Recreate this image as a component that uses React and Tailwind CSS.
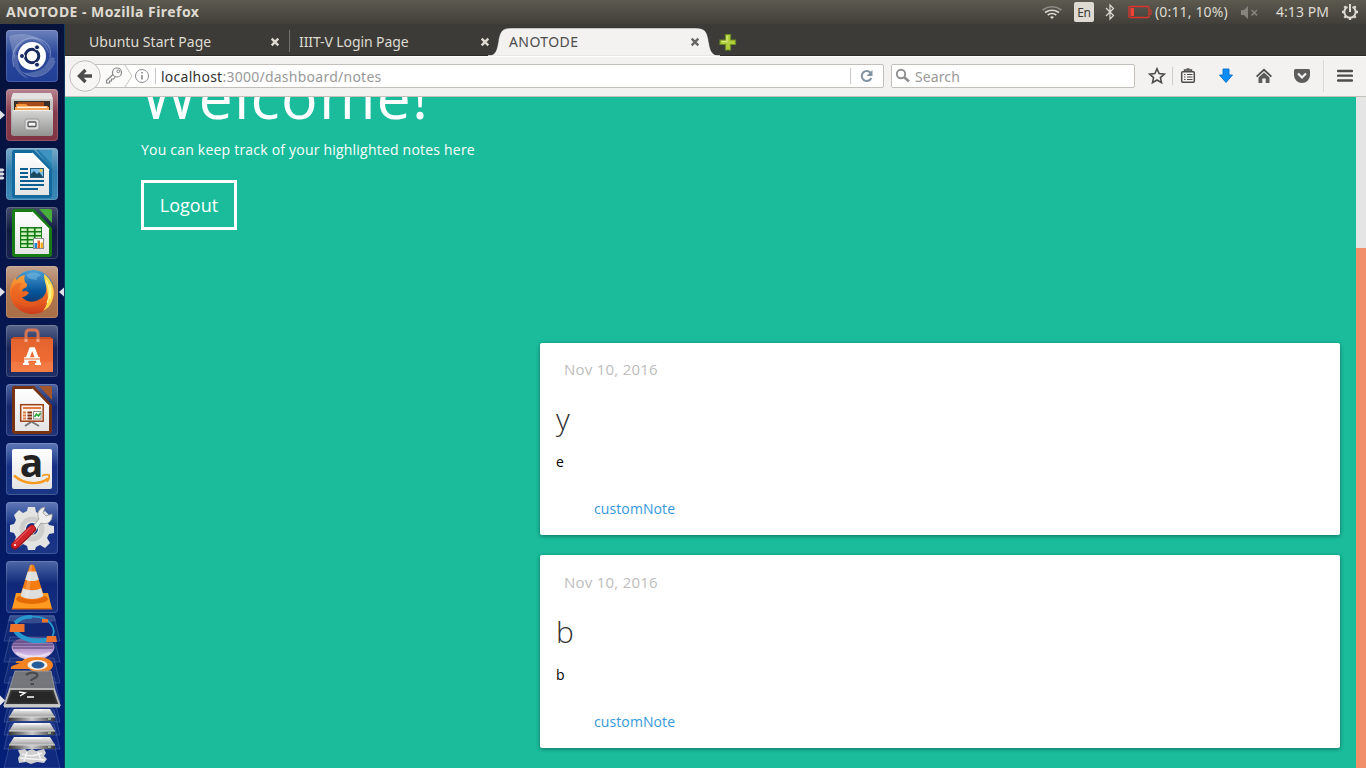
import React from "react";

const UI = "font-['Noto_Sans','Open_Sans',sans-serif]";

/* ---------- launcher icons, drawn on a 52x52 tile ---------- */

const Dash = () => (
  <g>
    <g fill="none" stroke="#b9c8ea" strokeOpacity=".4">
      <path d="M8 37C2 18 18 4 33 9c9 3 13 10 11 18" strokeWidth="1.2" />
      <path d="M49 31C44 46 27 51 17 42" strokeWidth="1" />
    </g>
    <path d="M3 6c13-5 36-2 41 19L38 15C26 4 12 9 8 30z" fill="#fff" fillOpacity=".2" />
    <path d="M49 28c-2 15-18 23-31 15 15 0 22-5 26-16z" fill="#fff" fillOpacity=".2" />
    <path d="M8 24c-3 10 4 22 15 25-9-7-12-14-11-24z" fill="#fff" fillOpacity=".18" />
    <circle cx="26" cy="26" r="14" fill="#fff" />
    <circle cx="26" cy="26" r="6.800" fill="none" stroke="#17295f" strokeWidth="3" />
    <g fill="#17295f" stroke="#fff" strokeWidth="1">
      <circle cx="16" cy="26" r="2.500" />
      <circle cx="31" cy="17.300" r="2.500" />
      <circle cx="31" cy="34.700" r="2.500" />
    </g>
  </g>
);

const Files = () => (
  <g>
    <path d="M7 4h38l2 7v33q0 3-3 3H8q-3 0-3-3V11z" fill="url(#metal)" />
    <path d="M7 4h38l2 6H5z" fill="#e4e2e0" />
    <path d="M8 12h36v12H8z" fill="#3a2e2b" />
    <path d="M12 13h26v5H12z" fill="#a44a18" />
    <path d="M10 15h10l2 2h20v7H10z" fill="#f39237" />
    <path d="M9 18h34v5H9z" fill="#f7a455" />
    <path d="M11 17.500h30v1.500H11z" fill="#fff2dd" />
    <path d="M7 21h38q2 0 2 2v21q0 3-3 3H9q-3 0-3-3V23q0-2 1-2z" fill="url(#metal)" />
    <path d="M7 21.500h38" stroke="#f0f0ef" />
    <rect x="19" y="30" width="14" height="11" rx="2" fill="#dcdcdc" stroke="#989898" />
    <rect x="22" y="33" width="8" height="4.500" rx="1" fill="#f5f5f5" stroke="#555" strokeWidth="1.300" />
  </g>
);

const Paper = ({ c, tab }) => (
  <g>
    <path d="M8 2h20l18 19v26q0 3-3 3H9q-3 0-3-3V5q0-3 2-3z" fill={c} />
    <path d="M33 2h11q2 0 2 2v12z" fill={tab} />
    <path d="M9 5h17l17 17v25H9z" fill="url(#paper)" />
    <path d="M26 5l17 17.500" stroke="#fff" strokeWidth="1.500" />
  </g>
);

const Writer = () => (
  <g>
    <path d="M30 2h14q2 0 2 2v18z" fill="#257fae" />
    <Paper c="#126a9e" tab="#3f93c0" />
    <path d="M14 21h8M14 25h8M14 29h8M14 33h24M14 37h24M14 41h18" stroke="#0b5f93" strokeWidth="1.800" />
    <rect x="24.500" y="20.500" width="13" height="9" fill="#79bee9" stroke="#245a7c" />
    <path d="M25 29v-3l3-3 3 3 2-2 4 5z" fill="#184760" />
    <circle cx="35" cy="22.500" r="1.500" fill="#f4c83b" />
  </g>
);

const Calc = () => (
  <g>
    <Paper c="#167c14" tab="#48ae3b" />
    <rect x="14" y="20" width="22" height="21" fill="#157a14" />
    <g fill="#cdf2bd">
      {[21.5, 25.5, 29.5, 33.5, 37.5].map((y) =>
        [15.2, 22.4, 29.6].map((x) => <rect key={x + "-" + y} x={x} y={y} width="5.500" height="2.500" />)
      )}
    </g>
    <rect x="27.500" y="31.500" width="10" height="10" fill="#fff" stroke="#8b8b8b" />
    <path d="M28.500 36h2.500v5h-2.500z" fill="#1588d1" />
    <path d="M31.500 33.500H34V41h-2.500z" fill="#e9641c" />
    <path d="M34.500 35.500H37V41h-2.500z" fill="#f2b01e" />
  </g>
);

const Firefox = () => (
  <g>
    <circle cx="27" cy="25" r="21" fill="url(#globe)" />
    <path d="M20 9c5-4 13-3 15 1-3 0-5 2-4 4-5-1-8 0-11-5z" fill="#8fcdec" fillOpacity=".4" />
    <path d="M38 8c10 8 13 19 8 28-4 8-11 12-19 12C14 48 4 38 4 26c0-7 3-11 5-14l2 2c1-3 4-4 8-5-1 3-1 4 0 7l2 2c1 2-1 4-4 5l-1 3c3-1 5-1 7 1-2 2-4 4-7 4 3 4 9 6 15 4 8-3 11-10 9-20z" fill="url(#fox)" />
    <path d="M38 8c9 7 12 18 8 27-2 5-5 8-9 10 5-7 6-13 4-21-1-6-3-10-3-16z" fill="#ffd84c" />
    <path d="M40 14c4 7 5 15 1 23M44 18c1 5 1 10 0 15" fill="none" stroke="#fff19a" strokeWidth="1.200" />
    <path d="M5 26c2-8 7-10 12-8-4 1-5 5-2 8 3-2 6-2 8 1-4 0-4 4-8 4 5 7 16 6 20 0-1 8-12 13-20 8C8 36 5 31 5 26z" fill="#e75d1e" fillOpacity=".5" />
  </g>
);

const Software = () => (
  <g>
    <path d="M5 14l3-2h36l3 2v33H5z" fill="url(#bag)" />
    <path d="M5 14l3-2h36l3 2z" fill="#c94f22" />
    <path d="M5 37h42v10H5z" fill="#fff" fillOpacity=".07" />
    <path d="M20 17V9q0-4 3-4h6q3 0 3 4v8" fill="none" stroke="#d77455" strokeWidth="3" />
    <path d="M20 14v3M32 14v3" stroke="#f5a580" strokeWidth="3" />
    <path d="M19.500 39l5.500-15h2.500L33 39M18 34h16" fill="none" stroke="#fff" strokeWidth="3.700" />
    <path d="M18 34h16" stroke="#ee6a31" strokeWidth="1" />
    <path d="M17 39h6M29 39h6" stroke="#fff" strokeWidth="2" />
  </g>
);

const Impress = () => (
  <g>
    <Paper c="#783313" tab="#a3562b" />
    <path d="M25 38l-6 4M26 38l7 4" stroke="#777" strokeWidth="2" />
    <rect x="14.700" y="20.700" width="22.500" height="16.500" fill="#fff2e8" stroke="#9b4318" strokeWidth="1.500" />
    <path d="M17 24h18" stroke="#e07a42" strokeWidth="2" />
    <path d="M17 28.500h3M17 31.500h3M17 34.500h3" stroke="#e17a43" strokeWidth="2" />
    <path d="M21.500 28.500h4.500M21.500 31.500h4.500M21.500 34.500h4.500" stroke="#752e12" strokeWidth="2" />
    <rect x="27.500" y="27.500" width="7.500" height="7.500" fill="#fff" stroke="#888" />
    <path d="M28.500 33l2-3 2 2 2-3" fill="none" stroke="#23a52b" strokeWidth="1.500" />
  </g>
);

const Amazon = () => (
  <g>
    <rect x="6" y="6" width="40" height="40" rx="2" fill="url(#paper)" />
    <text x="25.500" y="33.500" textAnchor="middle" fontFamily="Open Sans, sans-serif" fontWeight="700" fontSize="39" fill="#222">a</text>
    <path d="M8 32.500c10 9 25 10 34 3" fill="none" stroke="#f79a1d" strokeWidth="2.400" />
    <path d="M36 33q4-2 7-1 1 3-2 7" fill="none" stroke="#f79a1d" strokeWidth="1.800" />
  </g>
);

const Settings = () => (
  <g>
    <path fill="#e3e3e1" fillRule="evenodd" d="M22 5h7l1 5 4 2 5-3 5 5-3 5 2 4 5 1v7l-5 1-2 4 3 5-5 5-5-3-4 2-1 3h-7l-1-4-4-2-4 3-5-5 2-5-2-4-4-1v-7l4-1 2-4-2-5 5-5 4 3 4-2zM26 21a6 6 0 100 12 6 6 0 000-12z" />
    <circle cx="26" cy="27" r="10" fill="none" stroke="#cdcdcd" strokeWidth="5" />
    <path d="M22 30l11-13c-3-6 0-11 6-12l-2 6 3 3 6-2c1 8-5 11-11 9L27 33z" fill="#eeeeec" stroke="#999" strokeWidth=".8" />
    <path d="M9 43.500L26 27" stroke="#9c1118" strokeWidth="8" strokeLinecap="round" />
    <path d="M9 43L26 26.500" stroke="#d2252e" strokeWidth="6" strokeLinecap="round" />
    <path d="M9 40.500L24 25.500" stroke="#f27175" strokeWidth="1" />
    <circle cx="9" cy="43" r="1" fill="#fff" />
  </g>
);

const Vlc = () => (
  <g>
    <path d="M10 32h32l4 16H6z" fill="#ff9b20" />
    <path d="M6 47h40l.5 1.500h-41z" fill="#e26d05" />
    <ellipse cx="26" cy="38" rx="16" ry="5" fill="#e36b06" />
    <path d="M24 4q2-1 4 0l10 31c-3 5-21 5-24 0z" fill="#f47c10" />
    <path d="M21.800 10.500h8.400l2.600 8c-3 2-10.600 2-13.600 0zM17 27c4 3 14 3 18 0l2.500 8c-6 4-17 4-23 0z" fill="#dededc" />
    <path d="M24 4l-6 33h5l3-33z" fill="#fff" fillOpacity=".22" />
  </g>
);

const tiles = [
  { id: "dash", bg: "bg-gradient-to-b from-[#6c82ba] via-[#2c479b] via-45% to-[#203f96]", Icon: Dash },
  { id: "files", bg: "bg-gradient-to-b from-[#b78490] via-[#873c4d] via-45% to-[#813343]", Icon: Files, left: "one" },
  { id: "writer", bg: "bg-gradient-to-b from-[#78a8c7] via-[#2f7eae] via-45% to-[#3b86b5]", Icon: Writer, left: "many" },
  { id: "calc", bg: "bg-gradient-to-b from-[#454d6c] via-[#111c44] via-45% to-[#17234f]", Icon: Calc },
  { id: "firefox", bg: "bg-gradient-to-b from-[#c3a18c] via-[#ae7854] via-45% to-[#a86e47]", Icon: Firefox, left: "one", right: true },
  { id: "software", bg: "bg-gradient-to-b from-[#596689] via-[#17245a] via-45% to-[#1f2e66]", Icon: Software },
  { id: "impress", bg: "bg-gradient-to-b from-[#5166a0] via-[#13266f] via-45% to-[#1e3378]", Icon: Impress },
  { id: "amazon", bg: "bg-gradient-to-b from-[#5f77b6] via-[#163084] via-45% to-[#1c3785]", Icon: Amazon },
  { id: "settings", bg: "bg-gradient-to-b from-[#6279b7] via-[#153085] via-45% to-[#1b3686]", Icon: Settings },
  { id: "vlc", bg: "bg-gradient-to-b from-[#4f67a6] via-[#0f2879] via-45% to-[#183283]", Icon: Vlc },
];

const Defs = () => (
  <defs>
    <linearGradient id="metal" x2="0" y2="1"><stop stopColor="#d6d6d5" /><stop offset="1" stopColor="#929291" /></linearGradient>
    <linearGradient id="paper" x2="0" y2="1"><stop stopColor="#fff" /><stop offset="1" stopColor="#e4e4e4" /></linearGradient>
    <linearGradient id="globe" x2="0" y2="1"><stop stopColor="#4d9fd6" /><stop offset=".5" stopColor="#07569b" /><stop offset="1" stopColor="#092758" /></linearGradient>
    <linearGradient id="fox" x2="0" y2="1"><stop stopColor="#fda53a" /><stop offset=".6" stopColor="#ec6420" /><stop offset="1" stopColor="#cc3b1c" /></linearGradient>
    <linearGradient id="bag" x2="0" y2="1"><stop stopColor="#e2622e" /><stop offset="1" stopColor="#f57236" /></linearGradient>
    <linearGradient id="drive" x2="0" y2="1"><stop stopColor="#f2f2f2" /><stop offset="1" stopColor="#9d9d9d" /></linearGradient>
    <linearGradient id="pearl" x2="0" y2="1"><stop stopColor="#63508b" /><stop offset=".55" stopColor="#b79ad0" /><stop offset="1" stopColor="#eadcf5" /></linearGradient>
    <linearGradient id="bolt" x2="1" y2="0"><stop stopColor="#333" /><stop offset=".5" stopColor="#ccc" /><stop offset="1" stopColor="#333" /></linearGradient>
  </defs>
);

const FoldedTray = ({ y }) => (
  <path d={`M10 ${y}h44l6 25H4z`} fill="#7f95ca" fillOpacity=".1" stroke="#8195c7" strokeOpacity=".3" />
);

const Drive = ({ y }) => (
  <g>
    <path d={`M14 ${y}h36l5 8H9z`} fill="url(#drive)" />
    <path d={`M20 ${y + 1}h22`} fill="none" stroke="#fff" />
    <path d={`M9 ${y + 8}h46v4H9z`} fill="url(#bolt)" />
    <path d={`M9 ${y + 8}h46`} stroke="#e2e2e2" />
    <path d={`M48 ${y + 10}h3`} stroke="#d7ffd1" />
  </g>
);

/* Icons that fold up at the end of the launcher */
const FoldedStack = () => (
  <svg width="64" height="155" viewBox="0 0 64 155" className="block shrink-0">
    {[3, 24, 45, 64, 84, 97, 111, 130].map((y) => <FoldedTray key={y} y={y} />)}
    <path d="M10 2h44l2 6q-24 5-48 0z" fill="#7c90c2" fillOpacity=".35" />
    <path d="M11.500 34c0-6 8-10 21.500-10s21.500 4 21.500 10S46 47 33 47s-21.500-7-21.500-13z" fill="url(#pearl)" />
    <path d="M14 29h38M12 32h41M13 35h40" stroke="#4d356d" strokeWidth=".9" />
    <path d="M16 40q18 7 34 0" fill="none" stroke="#fff" strokeOpacity=".5" strokeWidth="2" />
    <g fill="none" stroke="#2799ce">
      <path d="M15 12C22 1 44 1 51 11q5 7 1 13" strokeWidth="1.800" />
      <path d="M15 12Q13 22 30 27q10 2 21-1" strokeWidth="4.500" />
      <path d="M15 10Q22 3 32 4" strokeWidth="3.500" />
    </g>
    <path d="M10.500 11h14v8h-15zM47 23h9l1 6H46zM42 6h6v3.500h-6z" fill="#ef742b" />
    <path d="M20 50c2-3 8-6 16-6 10 0 17 3 17 8 0 8-17 10-24 4H11q-1-2 1-3z" fill="#f18323" />
    <path d="M24 46h8l-2 4H16q-1-2 2-2h6z" fill="#f18323" />
    <ellipse cx="37.500" cy="52" rx="10" ry="5" fill="#f5f1e9" />
    <ellipse cx="38" cy="52" rx="6.500" ry="3.500" fill="#255b99" />
    <path d="M15 58h36l4 19H9z" fill="#7d7d7d" fillOpacity=".92" stroke="#aaa" strokeOpacity=".7" />
    <path d="M26 62q6-4 11-1c3 4-6 4-6 7M30.500 71h3.500" fill="none" stroke="#4a4a4a" strokeWidth="2.200" />
    <path d="M10 76h44l5.500 16H4.500z" fill="#353535" stroke="#b4b4b4" strokeWidth="2" />
    <path d="M4 91.500h56v3H4z" fill="#c9c9c9" />
    <path d="M12 79h40l3.500 10.500h-47z" fill="#272727" />
    <path d="M19 79l6 1-5 3M27 84h7" fill="none" stroke="#fff" strokeWidth="1.400" />
    <path d="M0 82.500l5 5-5 5z" fill="#e8e8e8" />
    <Drive y={96} />
    <Drive y={110} />
    <Drive y={124} />
    <path d="M18 137l7-1 2 2 5-2 4 2 8-2 2 4-2 3 3 3-3 4-7-1-6 2-5-2-7 1-1-5 2-3z" fill="#cfcfcf" />
    <path d="M22 141q10 4 20-1M20 145l25 2M27 139l-3 9M38 139l3 8" fill="none" stroke="#f3f3f3" strokeWidth="1.500" />
  </svg>
);

const Launcher = () => (
  <aside className="flex w-[65px] shrink-0 flex-col gap-[7px] overflow-hidden border-r border-[#123a5c] bg-gradient-to-b from-[#06123a] via-[#06154c] via-35% to-[#031f78] pt-1.5">
    {tiles.map(({ id, bg, Icon, left, right }) => (
      <div key={id} className="flex h-[52px] w-16 shrink-0 items-center">
        <svg width="6" height="12" viewBox="0 0 6 12" className="shrink-0">
          {left === "one" && <path d="M0 1.500l5 4.500-5 4.500z" fill="#dfe1e6" />}
          {left === "many" && <path d="M0 .5h3l1.500 1.500L3 3.500H0zM0 4.500h3L4.500 6 3 7.500H0zM0 8.500h3L4.500 10 3 11.500H0z" fill="#dfe1e6" />}
        </svg>
        <div className={`h-[52px] w-[52px] shrink-0 overflow-hidden rounded-[4px] shadow-[inset_0_0_0_1px_rgba(255,255,255,0.16)] ${bg}`}>
          <svg width="52" height="52" viewBox="0 0 52 52" className="block"><Defs /><Icon /></svg>
        </div>
        <svg width="6" height="12" viewBox="0 0 6 12" className="shrink-0">
          {right && <path d="M6 1.500L1 6l5 4.500z" fill="#dfe1e6" />}
        </svg>
      </div>
    ))}
    <div className="-mt-[7px]"><FoldedStack /></div>
  </aside>
);

/* ---------- system panel ---------- */

const SystemBar = () => (
  <header className={`flex h-6 shrink-0 items-center bg-gradient-to-b from-[#5d5a4f] to-[#403f39] text-[#dfdbd2] ${UI}`}>
    <h1 className="w-[1041px] pl-1.5 text-[14px] leading-6 font-bold tracking-[0.46px] whitespace-nowrap">ANOTODE - Mozilla Firefox</h1>
    <svg width="22" height="24" viewBox="0 0 22 24" fill="none" strokeWidth="1.700">
      <path d="M1.500 10q9.500-6.500 19 0" stroke="#8d8a82" />
      <path d="M4 12.500q7-4.500 14 0M6.700 15q4.300-3 8.600 0" stroke="#dfdbd2" />
      <path d="M9 17q2-1.300 4 0l-2 2z" fill="#dfdbd2" />
    </svg>
    <div className="ml-[11px] flex h-5 w-5 items-center justify-center rounded-[2px] bg-[#dfdbd2] pt-0.5 text-[12px] tracking-[-0.4px] text-[#3c3b37]">En</div>
    <svg width="12" height="24" viewBox="0 0 12 24" className="ml-[10px]"><path d="M2 8l7.500 7.500L6 19V5l3.500 3.500L2 16" fill="none" stroke="#dfdbd2" strokeWidth="1.200" /></svg>
    <svg width="24" height="24" viewBox="0 0 24 24" className="ml-[12px]">
      <rect x="1" y="6.500" width="20" height="11" rx="1" fill="none" stroke="#d9342b" strokeWidth="1.300" />
      <path d="M22 10h1v4.500h-1" fill="none" stroke="#d9342b" />
      <path d="M2.500 8H6v8H2.500z" fill="#ef4135" />
    </svg>
    <span className="-mt-0.5 ml-[3px] w-[82px] text-[14px] tracking-[0.15px] whitespace-nowrap">(0:11, 10%)</span>
    <svg width="20" height="24" viewBox="0 0 20 24" className="ml-[3px]">
      <path d="M1 10h3l4-4v13l-4-4H1z" fill="#85837b" />
      <path d="M11.500 10l5.500 5.500M17 10l-5.500 5.500" stroke="#85837b" strokeWidth="1.700" />
    </svg>
    <span className="-mt-0.5 ml-4 w-[65px] text-[14px] tracking-[0.05px] whitespace-nowrap">4:13 PM</span>
    <svg width="18" height="24" viewBox="0 0 18 24" fill="none" stroke="#dfdbd2">
      <path d="M6.500 6.900a5.700 5.700 0 1 0 5 0" strokeWidth="2" />
      <path d="M9 4v8" strokeWidth="2" />
      <path d="M1 12h2.500M14.500 12H17M3.300 6.300l1.500 1.500M14.700 6.300l-1.500 1.500M3.300 17.700l1.500-1.500M14.700 17.700l-1.500-1.500M9 18v2" strokeWidth="2.300" />
    </svg>
  </header>
);

/* ---------- browser chrome ---------- */

const Cross = ({ color }) => (
  <svg width="10" height="10" viewBox="0 0 10 10" className="mr-[9px] shrink-0"><path d="M1.700 1.700l6.600 6.600M8.300 1.700L1.700 8.300" stroke={color} strokeWidth="2.400" /></svg>
);

const TabBar = () => (
  <nav className={`flex h-8 shrink-0 bg-[#3c3b37] pl-3.5 text-[14px] text-[#dfdbd2] shadow-[inset_0_-1px_0_#2b2a27] ${UI}`}>
    <div className="flex w-[210px] items-center justify-between pt-1 pl-2.5">
      <span className="-mt-0.5 tracking-[0.05px] whitespace-nowrap">Ubuntu Start Page</span><Cross color="#dfdbd2" />
    </div>
    <div className="flex w-[210px] items-center">
      <span className="mt-0.5 h-[22px] w-px bg-[#74726c]" />
      <div className="flex grow items-center justify-between pt-1 pl-[9px]">
        <span className="-mt-0.5 tracking-[-0.1px] whitespace-nowrap">IIIT-V Login Page</span><Cross color="#dfdbd2" />
      </div>
    </div>
    <div className="relative flex w-[210px] items-center justify-between pt-1 pl-2.5 text-[#4c4c4c]">
      <svg width="234" height="32" viewBox="0 0 234 32" className="absolute top-0 -left-3">
        <path d="M0 32C8 32 9.500 27 11 19 12.500 9 14 4 24 4H209C219 4 220.500 9 222 19 223.500 27 225 32 234 32z" fill="#f3f2f1" stroke="#2b2a27" strokeOpacity=".6" strokeWidth=".8" />
        <path d="M1 32h232" stroke="#f3f2f1" strokeWidth="1.500" />
      </svg>
      <span className="relative -mt-0.5 tracking-[0.4px]">ANOTODE</span>
      <span className="relative"><Cross color="#666" /></span>
    </div>
    <svg width="18" height="32" viewBox="0 0 18 32" className="ml-[10px]">
      <path d="M6.500 10.500h5V16h5v4.500h-5V26h-5v-5.500H1V16h5.500z" fill="#b3cf3e" stroke="#6b8f23" strokeWidth="1.200" />
      <path d="M8 12v5.500H2.500" fill="none" stroke="#e3ef8f" />
    </svg>
  </nav>
);

const Toolbar = () => (
  <div className={`flex h-[41px] shrink-0 items-center border-b border-[#c3c0bc] bg-[#f3f2f1] pl-1 shadow-[inset_0_1px_0_#fff] ${UI}`}>
    <svg width="32" height="34" viewBox="0 0 32 34" className="z-10 shrink-0">
      <circle cx="16" cy="17" r="15.300" fill="#f7f6f5" stroke="#c0bdb9" />
      <path d="M16.500 11l-6 6 6 6M11 17h12" fill="none" stroke="#4c4c4c" strokeWidth="3.400" />
    </svg>
    <div className="-ml-3 mr-[7px] flex h-6 w-[795px] items-center rounded-[2px] border border-[#c3c0bc] bg-white">
      <svg width="53" height="22" viewBox="0 0 53 22" className="ml-[10px] shrink-0" fill="none">
        <path d="M0 0h25l7 11-7 11H0z" fill="#fbfbfa" />
        <path d="M25 0l7 11-7 11" stroke="#c6c4c0" />
        <circle cx="17" cy="7.500" r="4.500" stroke="#888" strokeWidth="1.200" />
        <circle cx="18.300" cy="6.300" r="1.400" stroke="#888" />
        <path d="M13 9.500l-6.500 6v2.500h3v-2h2v-2h2l2-2.500" stroke="#888" strokeWidth="1.200" />
        <circle cx="42" cy="11" r="6.500" stroke="#8b8b8b" />
        <path d="M42 10v4.500M42 7v1.600" stroke="#8b8b8b" strokeWidth="1.600" />
      </svg>
      <span className="ml-[2px] h-4 w-px bg-[#c9c9c9]" />
      <div className="ml-[5px] flex grow text-[14px] tracking-[0.25px] whitespace-nowrap">
        <span className="text-[#333]">localhost</span>
        <span className="text-[#999]">:3000/dashboard/notes</span>
      </div>
      <span className="h-4 w-px bg-[#c9c9c9]" />
      <svg width="32" height="22" viewBox="0 0 32 22">
        <path d="M19.800 8a5 5 0 1 0 .5 5" fill="none" stroke="#8292a2" strokeWidth="2" />
        <path d="M21.500 5v6h-6z" fill="#8292a2" />
      </svg>
    </div>
    <div className="flex h-6 w-[244px] items-center rounded-[2px] border border-[#c3c0bc] bg-white">
      <svg width="22" height="22" viewBox="0 0 22 22" fill="none" stroke="#8e8e8e"><circle cx="9" cy="9" r="4.200" strokeWidth="1.900" /><path d="M12 12l5 4.500" strokeWidth="2.500" /></svg>
      <span className="ml-px text-[14px] tracking-[0.1px] text-[#999]">Search</span>
    </div>
    <svg width="18" height="20" viewBox="0 0 18 20" className="ml-[13px]"><path d="M9 2.800l2.100 4.800 5.200.5-3.900 3.500 1.100 5.100L9 14l-4.500 2.700 1.100-5.100-3.900-3.500 5.200-.5z" fill="none" stroke="#4c4c4c" strokeWidth="1.600" /></svg>
    <span className="ml-[6px] h-[18px] w-px bg-[#cfcdca]" />
    <svg width="16" height="18" viewBox="0 0 16 18" className="ml-[7px]" fill="none" stroke="#4c4c4c">
      <path d="M4.500 4V3h7v1" strokeWidth="1.400" />
      <path d="M6.500 2h3" strokeWidth="1.400" />
      <rect x="1.700" y="4.700" width="12.600" height="10.600" rx="1" strokeWidth="1.500" />
      <path d="M4 7.500h1.500M7 7.500h5.500M4 10h1.500M7 10h5.500M4 12.500h1.500M7 12.500h5.500" strokeWidth="1.200" />
    </svg>
    <svg width="16" height="18" viewBox="0 0 16 18" className="ml-[22px]"><path d="M5 2h6v6h3.500L8 15.500 1.500 8H5z" fill="#0a8cfb" stroke="#0670cc" strokeWidth=".9" /></svg>
    <svg width="18" height="18" viewBox="0 0 18 18" className="ml-[21px]">
      <path d="M9 1.500L17 9l-1.200 1.200L9 4l-6.800 6.200L1 9z" fill="#4c4c4c" />
      <path d="M9 5.500l5.500 5V16h-3.800v-4.500H7.300V16H3.500v-5.500z" fill="#5b5b5b" />
    </svg>
    <svg width="18" height="18" viewBox="0 0 18 18" className="ml-5">
      <path d="M2.500 2h13q1.500 0 1.500 1.500V8a8 8 0 01-16 0V3.500Q1 2 2.500 2z" fill="#5c5c5c" />
      <path d="M5 6.500l4 4 4-4" fill="none" stroke="#f3f2f1" strokeWidth="2.200" />
    </svg>
    <span className="ml-3 h-8 w-px bg-[#dbd9d6]" />
    <svg width="16" height="18" viewBox="0 0 16 18" className="ml-[13px]"><path d="M1 4h14M1 8.700h14M1 13.500h14" stroke="#4c4c4c" strokeWidth="2.300" strokeLinecap="round" /></svg>
  </div>
);

/* ---------- page ---------- */

const NoteCard = ({ date, title, body, tag, second }) => (
  <article className={`flex w-[800px] flex-col rounded-[2px] bg-white shadow-[0_1px_4px_rgba(0,0,0,0.4)] ${second ? "h-[193px] pt-px" : "h-48"}`}>
    <time className="mt-4 pl-6 text-[15px] leading-5 tracking-[0.25px] text-[#bdbdbd]">{date}</time>
    <h2 className="mt-[22px] pl-4 text-[30px] leading-9 font-light text-[#333]">{title}</h2>
    <p className="mt-[15px] pl-4 text-[14px] leading-5 text-black">{body}</p>
    <a className="mt-[27px] pl-[54px] text-[14px] leading-5 tracking-[0.1px] text-[#3498db]">{tag}</a>
  </article>
);

const Page = () => (
  <main className="flex min-h-0 grow overflow-hidden bg-[#1abc9c] font-['Open_Sans','Noto_Sans',sans-serif]">
    <div className="flex grow flex-col overflow-hidden">
      <section className="flex h-[246px] shrink-0 flex-col items-start pl-[76px] text-white">
        <h1 className="-mt-[41px] text-[61px] leading-[80px] tracking-[1.2px]">Welcome!</h1>
        <p className="mt-[4px] text-[14px] leading-5 tracking-[0.21px]">You can keep track of your highlighted notes here</p>
        <button className="mt-5 flex h-[50px] w-24 items-center justify-center border-[3px] border-white text-[18px] leading-6">Logout</button>
      </section>
      <section className="flex flex-col items-end gap-5 pr-4">
        <NoteCard date="Nov 10, 2016" title="y" body="e" tag="customNote" />
        <NoteCard date="Nov 10, 2016" title="b" body="b" tag="customNote" second />
      </section>
    </div>
    <div className="flex w-2.5 shrink-0 flex-col bg-[#f08f69]"><div className="h-[151px] bg-[#e5e5e5]" /></div>
  </main>
);

export default function App() {
  return (
    <div className="flex h-[768px] w-[1366px] flex-col overflow-hidden">
      <SystemBar />
      <div className="flex min-h-0 grow">
        <Launcher />
        <div className="flex min-w-0 grow flex-col">
          <TabBar />
          <Toolbar />
          <Page />
        </div>
      </div>
    </div>
  );
}
